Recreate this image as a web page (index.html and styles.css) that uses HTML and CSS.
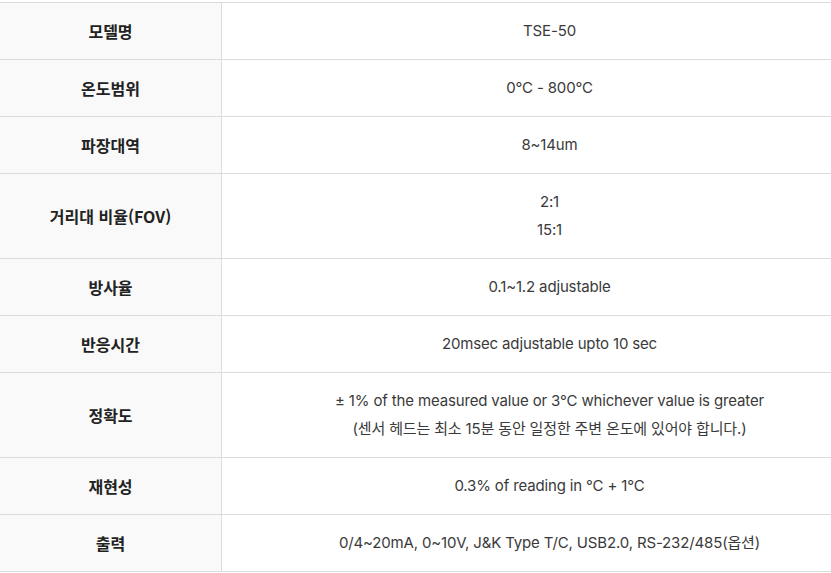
FILE: index.html
```html
<!DOCTYPE html>
<html lang="ko">
<head>
<meta charset="utf-8">
<link rel="stylesheet" href="styles.css">
</head>
<body>
<table class="spec">
  <tbody>
    <tr><th>모델명</th><td>TSE-50</td></tr>
    <tr><th>온도범위</th><td>0°C - 800°C</td></tr>
    <tr><th>파장대역</th><td>8~14um</td></tr>
    <tr><th>거리대 비율(FOV)</th><td>2:1<br>15:1</td></tr>
    <tr><th>방사율</th><td>0.1~1.2 adjustable</td></tr>
    <tr><th>반응시간</th><td>20msec adjustable upto 10 sec</td></tr>
    <tr><th>정확도</th><td>± 1% of the measured value or 3°C whichever value is greater<br>(센서 헤드는 최소 15분 동안 일정한 주변 온도에 있어야 합니다.)</td></tr>
    <tr><th>재현성</th><td>0.3% of reading in °C + 1°C</td></tr>
    <tr><th>출력</th><td>0/4~20mA, 0~10V, J&amp;K Type T/C, USB2.0, RS-232/485(옵션)</td></tr>
  </tbody>
</table>
</body>
</html>
```
FILE: styles.css
```css
html, body {
  margin: 0;
  padding: 0;
  background: #fff;
}
body {
  padding-top: 2px;
}
.spec {
  width: 831px;
  border-collapse: collapse;
  table-layout: fixed;
}
.spec th, .spec td {
  border-top: 1px solid #dcdcdc;
  border-bottom: 1px solid #dcdcdc;
  padding: 14px 10px;
  line-height: 28px;
  text-align: center;
  vertical-align: middle;
}
.spec th {
  width: 201px;
  background: #f9f9f9;
  border-right: 1px solid #dcdcdc;
  font-family: "Noto Sans CJK KR", "Noto Sans", sans-serif;
  font-weight: 700;
  font-size: 16px;
  color: #222;
}
.spec td {
  padding-left: 56px;
  font-family: Inter, "Noto Sans CJK KR", sans-serif;
  font-weight: 400;
  font-size: 15px;
  letter-spacing: -0.15px;
  color: #3a3a3a;
}
```
